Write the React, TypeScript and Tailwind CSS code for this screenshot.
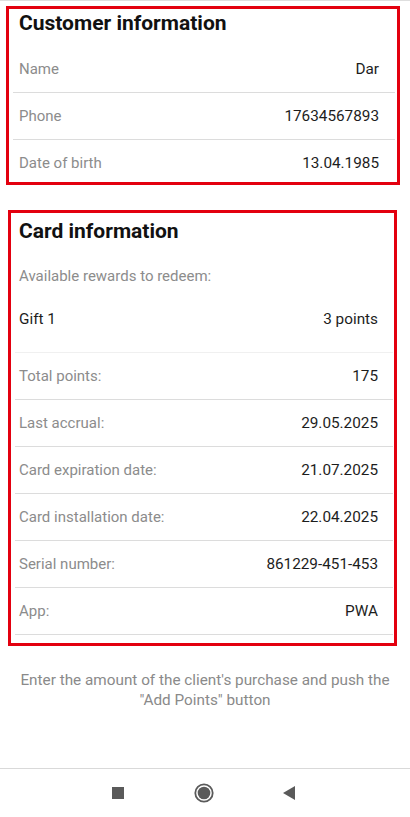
import React from "react";

const customer = [
  { label: "Name", value: "Dar" },
  { label: "Phone", value: "17634567893" },
  { label: "Date of birth", value: "13.04.1985" },
];

const card = [
  { label: "Total points:", value: "175" },
  { label: "Last accrual:", value: "29.05.2025" },
  { label: "Card expiration date:", value: "21.07.2025" },
  { label: "Card installation date:", value: "22.04.2025" },
  { label: "Serial number:", value: "861229-451-453" },
  { label: "App:", value: "PWA" },
];

function Row({
  label,
  value,
  last,
}: {
  label: string;
  value: string;
  last?: boolean;
}) {
  return (
    <div
      className={
        last
          ? "flex h-[42px] items-center justify-between pl-[6px] pr-[16px] pt-[4px]"
          : "flex h-[47px] items-center justify-between border-b border-[#dcdcdc] pl-[6px] pr-[16px]"
      }
    >
      <span className="text-[15px] text-[#8c8c8c]">{label}</span>
      <span className="text-[15.3px] text-[#1d1d1d]">{value}</span>
    </div>
  );
}

export default function App() {
  return (
    <div
      className="relative flex h-[817px] w-[410px] flex-col overflow-hidden bg-white"
      style={{ fontFamily: "Roboto, 'Noto Sans', sans-serif" }}
    >
      <div className="h-px bg-[#dedede]" />

      {/* Customer information */}
      <section className="mx-[6px] mt-[5px] w-[394px] border-[3px] border-[#e3000f]">
        <h2 className="pl-[10px] pt-px text-[21px] font-bold leading-[26px] text-[#111]">
          Customer information
        </h2>
        <div className="ml-[4px] mr-[2px] mt-[10px]">
          {customer.map((r, i) => (
            <Row key={r.label} {...r} last={i === customer.length - 1} />
          ))}
        </div>
      </section>

      {/* Card information */}
      <section className="ml-[8px] mt-[25px] w-[389px] border-[3px] border-[#e3000f] pb-[8px]">
        <h2 className="pl-[8px] pt-[5px] text-[21px] font-bold leading-[26px] text-[#111]">
          Card information
        </h2>
        <div className="ml-[4px] mr-[1px]">
          <p className="mt-[22px] pl-[4px] text-[15px] leading-[20px] text-[#8c8c8c]">
            Available rewards to redeem:
          </p>
          <div className="flex h-[67px] justify-between border-b border-[#f0f0f0] pl-[4px] pr-[15px] pt-[23px]">
            <span className="text-[15.3px] leading-[20px] text-[#1d1d1d]">Gift 1</span>
            <span className="text-[15.3px] leading-[20px] text-[#1d1d1d]">3 points</span>
          </div>
          {card.map((r) => (
            <div
              key={r.label}
              className="flex h-[47px] items-center justify-between border-b border-[#dcdcdc] pl-[4px] pr-[15px]"
            >
              <span className="text-[15px] text-[#8c8c8c]">{r.label}</span>
              <span className="text-[15.3px] text-[#1d1d1d]">{r.value}</span>
            </div>
          ))}
        </div>
      </section>

      <p className="mx-auto mt-[24px] w-[390px] text-center text-[15.3px] leading-[20px] text-[#8a8a8a]">
        Enter the amount of the client's purchase and push the "Add Points" button
      </p>

      {/* Android nav bar */}
      <div className="mt-auto flex h-[49px] items-center border-t border-[#d9d9d9] bg-white">
        <div className="ml-[112px] h-[12px] w-[12px] bg-[#5a5a5a]" />
        <svg className="ml-[70px]" width="20" height="20" viewBox="0 0 20 20">
          <circle cx="10" cy="10" r="8.7" fill="none" stroke="#5a5a5a" strokeWidth="1.8" />
          <circle cx="10" cy="10" r="6.3" fill="#5a5a5a" />
        </svg>
        <svg className="ml-[69px]" width="12" height="14" viewBox="0 0 12 14">
          <path d="M12 0 L0 7 L12 14 Z" fill="#5a5a5a" />
        </svg>
      </div>
    </div>
  );
}
